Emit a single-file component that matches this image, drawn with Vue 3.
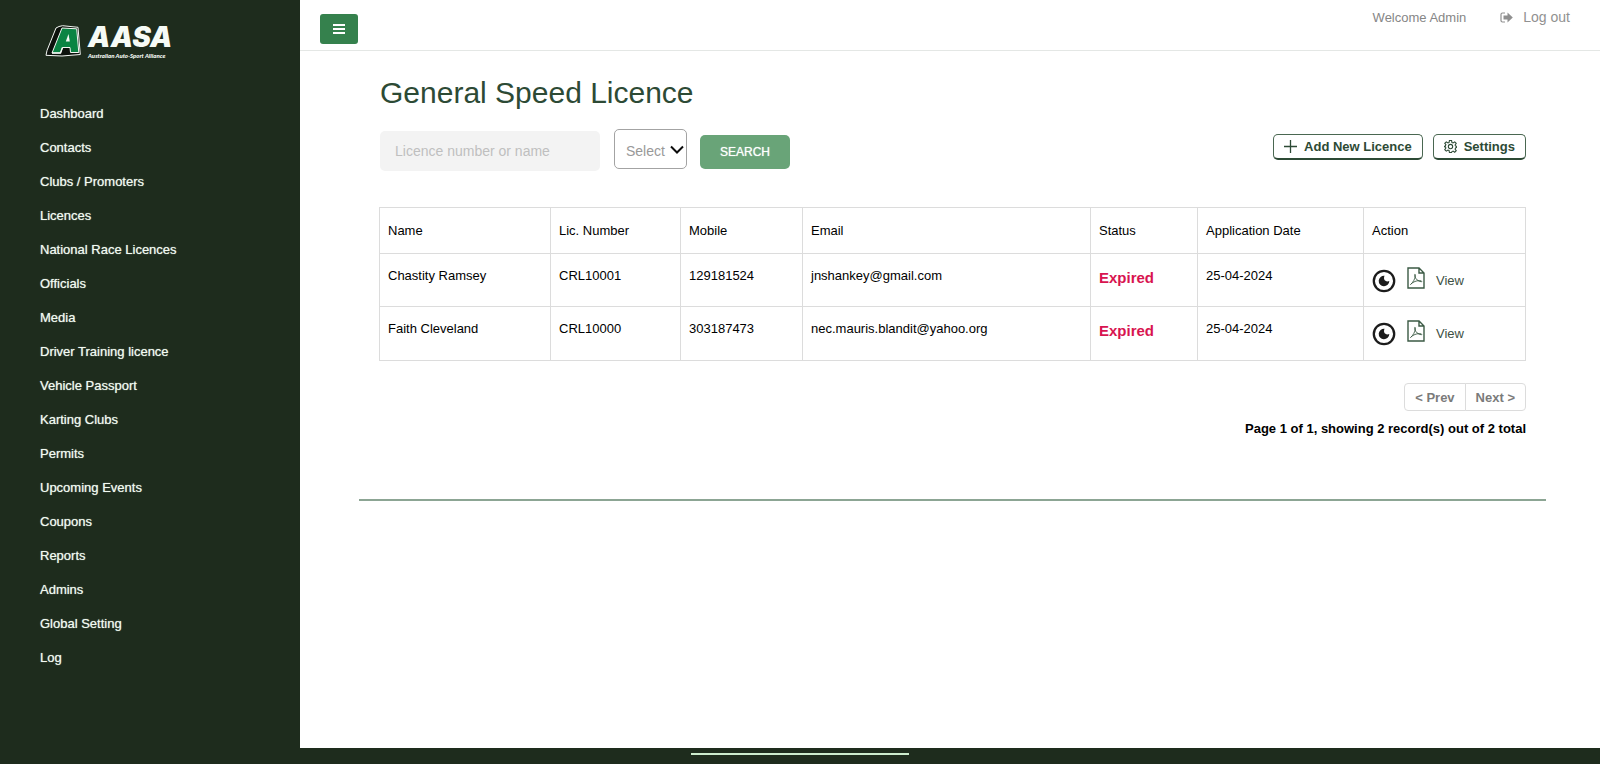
<script setup>
const menu = [
  'Dashboard', 'Contacts', 'Clubs / Promoters', 'Licences', 'National Race Licences',
  'Officials', 'Media', 'Driver Training licence', 'Vehicle Passport', 'Karting Clubs',
  'Permits', 'Upcoming Events', 'Coupons', 'Reports', 'Admins', 'Global Setting', 'Log',
]

const columns = [
  { label: 'Name', cls: 'c-name' },
  { label: 'Lic. Number', cls: 'c-lic' },
  { label: 'Mobile', cls: 'c-mobile' },
  { label: 'Email', cls: 'c-email' },
  { label: 'Status', cls: 'c-status' },
  { label: 'Application Date', cls: 'c-date' },
  { label: 'Action', cls: 'c-action' },
]

const rows = [
  { name: 'Chastity Ramsey', lic: 'CRL10001', mobile: '129181524', email: 'jnshankey@gmail.com', status: 'Expired', date: '25-04-2024' },
  { name: 'Faith Cleveland', lic: 'CRL10000', mobile: '303187473', email: 'nec.mauris.blandit@yahoo.org', status: 'Expired', date: '25-04-2024' },
]
</script>

<template>
  <div class="page">
    <div class="shell">
      <aside class="sidebar">
        <a href="#" class="brand" aria-label="AASA home">
          <svg class="emblem" viewBox="0 0 36 32" width="36" height="32" aria-hidden="true">
            <path d="M14 1.500 17.500 .7 33 2.300 35.300 29.500 17 31 1 30.300 2 25.500 11 3Z" fill="#0c120c" stroke="#f4f8f4" stroke-width="1" />
            <path d="M17 3 31.700 3.800 33.800 27.500H25.500L25 22.500H17.500L15.500 28H7Z" fill="#0a8443" stroke="#f4f8f4" stroke-width="1" />
            <path d="M23.500 9 20.800 16.500h4Z" fill="#f4f8f4" />
            <path d="M7 28H15.500L17.500 22.500" fill="none" stroke="#f4f8f4" stroke-width="1.400" />
          </svg>
          <span class="brand-words">
            <span class="brand-name">AASA</span>
            <span class="brand-tag">Australian Auto-Sport Alliance</span>
          </span>
        </a>
        <nav class="menu">
          <a v-for="item in menu" :key="item" href="#">{{ item }}</a>
        </nav>
      </aside>

      <div class="main">
        <header class="topbar">
          <button class="toggle" type="button" aria-label="Toggle menu">
            <svg viewBox="0 0 12 10" width="12" height="10"><path d="M0 1h12M0 5h12M0 9h12" stroke="#fff" stroke-width="2" /></svg>
          </button>
          <div class="account">
            <span>Welcome Admin</span>
            <a href="#" class="logout">
              <svg viewBox="0 0 13 11" width="13" height="11" aria-hidden="true">
                <path d="M5 1H2.500Q1 1 1 2.500v6Q1 10 2.500 10H5" fill="none" stroke="#8f8f8f" stroke-width="1.200" />
                <path d="M7.500 .5 12.800 5.500 7.500 10.500V7.500H3.500V3.500h4Z" fill="#8f8f8f" />
              </svg>
              Log out
            </a>
          </div>
        </header>

        <main class="content">
          <h1>General Speed Licence</h1>
          <div class="tools">
            <form class="filters" @submit.prevent>
              <input type="text" placeholder="Licence number or name" aria-label="Licence number or name" />
              <span class="pick">
                <select aria-label="Select status"><option>Select</option></select>
                <svg viewBox="0 0 14 9" width="14" height="9" aria-hidden="true"><path d="M1 1.500 7 7.500 13 1.500" fill="none" stroke="#0c0c0c" stroke-width="2" /></svg>
              </span>
              <button class="search" type="submit">SEARCH</button>
            </form>
            <div class="actions">
              <button class="outline" type="button">
                <svg viewBox="0 0 13 13" width="13" height="13" aria-hidden="true"><path d="M6.500 0v13M0 6.500h13" stroke="#2d4a35" stroke-width="1.300" /></svg>
                Add New Licence
              </button>
              <button class="outline" type="button">
                <svg viewBox="0 0 24 24" width="13" height="13" aria-hidden="true" fill="none" stroke="#2d4a35" stroke-width="2">
                  <path d="M10 1h4l.7 3.600 2.100.9 3-2.100 2.800 2.800-2.100 3 .9 2.100 2.600.5v1.400l-2.600 1.500-.9 2.100 2.100 3-2.800 2.800-3-2.100-2.100.9L14 23h-4l-.7-3.600-2.100-.9-3 2.100-2.800-2.800 2.100-3-.9-2.100L1 12.500v-1l1.600-.8.9-2.100-2.100-2.400 2.800-2.800 3 2.100 2.100-.9Z" />
                  <circle cx="12" cy="12" r="4" />
                </svg>
                Settings
              </button>
            </div>
          </div>

          <table class="grid">
            <thead>
              <tr><th v-for="c in columns" :key="c.label" :class="c.cls" scope="col">{{ c.label }}</th></tr>
            </thead>
            <tbody>
              <tr v-for="r in rows" :key="r.lic">
                <td>{{ r.name }}</td>
                <td>{{ r.lic }}</td>
                <td>{{ r.mobile }}</td>
                <td>{{ r.email }}</td>
                <td class="status">{{ r.status }}</td>
                <td>{{ r.date }}</td>
                <td>
                  <div class="row-actions">
                    <a href="#" class="eye" aria-label="Preview">
                      <svg viewBox="0 0 24 24" width="24" height="24">
                        <circle cx="12" cy="12" r="10.200" fill="none" stroke="#1c1c1c" stroke-width="2.300" />
                        <path d="M12.600 6.700A5.300 5.300 0 1 0 17.300 12 C15.500 13 12.800 12.300 12.200 10.300 11.900 9 12 7.700 12.600 6.700Z" fill="#1c1c1c" />
                      </svg>
                    </a>
                    <a href="#" class="pdf" aria-label="PDF">
                      <svg viewBox="0 0 18 22" width="18" height="22" fill="none" stroke="#3b5a44" stroke-width="1.400">
                        <path d="M1 1h11l5 5v15H1ZM12 1v5h5" />
                        <path d="M3.500 17.500C6 15.500 8 12 8.500 8.500 8.300 6.500 7.300 7 7.700 9c.8 3 3.300 5.500 6.800 5.800.9-.9-1-1.500-3.500-1.100-2.500.3-5.500 1.600-7.500 3.800Z" stroke-width="0.900" />
                      </svg>
                    </a>
                    <a href="#" class="view">View</a>
                  </div>
                </td>
              </tr>
            </tbody>
          </table>

          <div class="pager">
            <div class="pager-buttons">
              <button type="button">&lt; Prev</button>
              <button type="button">Next &gt;</button>
            </div>
            <p>Page 1 of 1, showing 2 record(s) out of 2 total</p>
          </div>
        </main>
      </div>
    </div>
    <footer class="footer"><span class="footer-line"></span></footer>
  </div>
</template>

<style>
body { margin: 0; }
</style>

<style scoped>
* { box-sizing: border-box; }
.page {
  min-height: 100vh;
  display: flex;
  flex-direction: column;
  font-family: "Liberation Sans", Arial, sans-serif;
  font-size: 13px;
  color: #000;
  background: #1e2c1d;
}
a { text-decoration: none; color: inherit; }
button, input, select { font-family: inherit; margin: 0; }
button { cursor: pointer; }
svg { display: block; flex: none; }
.shell { flex: 1; display: flex; }
.sidebar { flex: 0 0 300px; padding: 21px 40px 0; color: #f2faf2; }
.brand { display: flex; gap: 7px; height: 76px; padding-left: 5px; }
.emblem { margin-top: 4px; }
.brand-words { display: flex; flex-direction: column; white-space: nowrap; color: #f6fbf6; }
.brand-name { font-family: Inter, sans-serif; font-size: 28px; line-height: 32px; font-weight: 900; font-style: italic; }
.brand-tag { font-family: Lato, sans-serif; font-size: 6px; line-height: 6px; font-weight: 900; font-style: italic; }
.menu { display: flex; flex-direction: column; text-shadow: 0 0 1px #b4c4b4; }
.menu a { line-height: 34px; }

.main { flex: 1; min-width: 0; background: #fff; }
.topbar { height: 51px; display: flex; justify-content: space-between; align-items: flex-start; padding: 14px 30px 0 20px; border-bottom: 1px solid #e4e7e5; }
.toggle { width: 38px; height: 30px; padding: 0; display: flex; align-items: center; justify-content: center; border: 0; border-radius: 3px; background: #35814d; }
.account { display: flex; align-items: center; gap: 34px; height: 6px; color: #868686; }
.logout { display: flex; align-items: center; gap: 10px; font-size: 14px; color: #919191; }

.content { margin: 0 54px 0 59px; padding: 22px 20px 62px; border-bottom: 2px solid #8ca594; }
h1 { margin: 0; padding-left: 1px; font-size: 30px; line-height: 40px; font-weight: 400; color: #2d4a35; }
.tools { display: flex; justify-content: space-between; align-items: flex-start; padding-top: 16px; }
.filters { display: flex; align-items: flex-start; }
.filters input { width: 220px; height: 40px; margin: 2px 14px 0 1px; padding: 0 15px; border: 0; border-radius: 5px; background: #f3f3f3; font-size: 14px; }
.filters input::placeholder { color: #bfbfbf; opacity: 1; }
.pick { position: relative; display: block; width: 73px; height: 40px; margin-right: 13px; }
.pick select { width: 100%; height: 100%; padding: 4px 0 0 11px; border: 1px solid #a3a3a3; border-radius: 5px; background: #fff; appearance: none; font-size: 14px; color: #999; }
.pick svg { position: absolute; right: 3px; top: 16px; pointer-events: none; }
.search { width: 90px; height: 34px; margin-top: 6px; padding: 0; border: 0; border-radius: 5px; background: #69a478; color: #fff; font-size: 12px; text-shadow: 0 0 1px #dcecdf; }
.actions { display: flex; gap: 10px; padding-top: 5px; }
.outline { height: 26px; padding: 0 10px; display: flex; align-items: center; gap: 7px; border: 1px solid #4a6751; border-bottom: 2px solid #2d4a35; border-radius: 5px; background: #fff; color: #2d4a35; font-size: 13px; font-weight: 700; }

.grid { width: 100%; margin-top: 36px; border-collapse: collapse; table-layout: fixed; }
.grid th, .grid td { border: 1px solid #dcdcdc; padding: 0 8px; text-align: left; font-weight: 400; }
.grid th { height: 46px; }
.grid td { height: 53px; padding-top: 14px; vertical-align: top; line-height: 16px; }
.grid tr:last-child td { height: 54px; }
.c-name { width: 171px; }
.c-lic { width: 130px; }
.c-mobile { width: 122px; }
.c-status { width: 107px; }
.c-date { width: 166px; }
.c-action { width: 162px; }
.grid td.status { padding-top: 16px; font-size: 15px; font-weight: 700; color: #d81450; }
.row-actions { display: flex; align-items: center; height: 26px; }
.pdf { margin: 0 11px 6px; }
.view { color: #3d5043; }

.pager { display: flex; flex-direction: column; align-items: flex-end; padding-top: 22px; }
.pager-buttons { display: flex; }
.pager-buttons button { height: 28px; padding: 0 10px; border: 1px solid #dcdcdc; background: #fff; color: #7b7b7b; font-size: 13px; font-weight: 700; }
.pager-buttons button:first-child { border-radius: 4px 0 0 4px; }
.pager-buttons button:last-child { margin-left: -1px; border-radius: 0 4px 4px 0; }
.pager p { margin: 10px 0 0; line-height: 16px; font-weight: 700; }

.footer { height: 16px; padding-top: 5px; }
.footer-line { display: block; width: 218px; height: 2px; margin: 0 auto; background: #cdeccd; }
</style>
